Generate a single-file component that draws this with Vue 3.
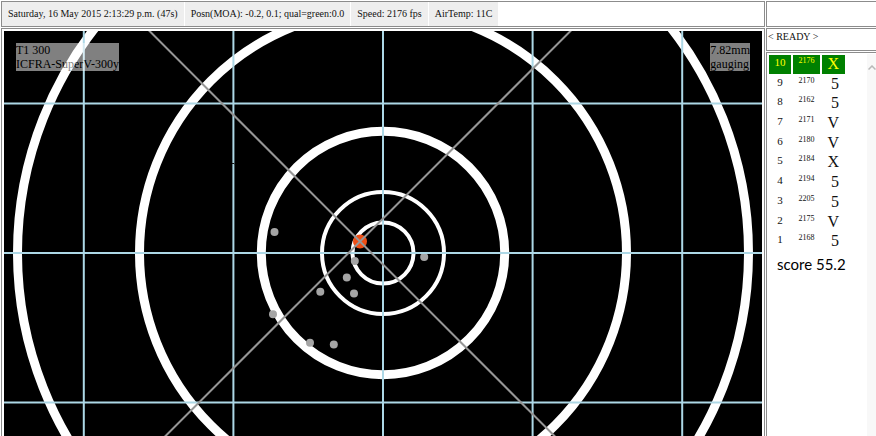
<script setup>
const readings = [
  'Saturday, 16 May 2015 2:13:29 p.m. (47s)',
  'Posn(MOA): -0.2, 0.1; qual=green:0.0',
  'Speed: 2176 fps',
  'AirTemp: 11C',
]

const rings = [
  { r: 365.5, w: 9 },
  { r: 243.5, w: 9 },
  { r: 121.7, w: 9 },
  { r: 61, w: 4 },
  { r: 30.5, w: 4 },
]
const columns = [79.8, 229.4, 379, 528.6, 678.2]
const rows = [72.4, 222, 371.6]

const hits = [
  [270.5, 201], [350.8, 229.9], [420.2, 226], [342.8, 246.5], [316.3, 260.8],
  [350, 262.4], [269, 283.2], [306, 311.7], [329.8, 313.6],
]
const latest = { x: 356, y: 210.5 }

const shots = [
  { n: 10, fps: 2176, value: 'X' },
  { n: 9, fps: 2170, value: '5' },
  { n: 8, fps: 2162, value: '5' },
  { n: 7, fps: 2171, value: 'V' },
  { n: 6, fps: 2180, value: 'V' },
  { n: 5, fps: 2184, value: 'X' },
  { n: 4, fps: 2194, value: '5' },
  { n: 3, fps: 2205, value: '5' },
  { n: 2, fps: 2175, value: 'V' },
  { n: 1, fps: 2168, value: '5' },
]
</script>

<template>
  <div class="page">
    <main class="main">
      <header class="bar frame">
        <span v-for="text in readings" :key="text" class="reading">{{ text }}</span>
      </header>
      <section class="range frame">
        <div class="target">
          <svg class="face" viewBox="0 0 758 405" preserveAspectRatio="xMidYMin slice" aria-hidden="true">
            <g fill="none" stroke="#fff">
              <circle v-for="ring in rings" :key="ring.r" cx="379" cy="222" :r="ring.r" :stroke-width="ring.w" />
            </g>
            <circle v-for="(hit, i) in hits" :key="i" :cx="hit[0]" :cy="hit[1]" r="4" fill="#a5a5a5" />
            <circle :cx="latest.x" :cy="latest.y" r="7" fill="#f04e14" />
            <g stroke="#add8e6" stroke-width="2">
              <line v-for="x in columns" :key="x" :x1="x" :x2="x" y1="0" y2="405" />
              <line v-for="y in rows" :key="y" x1="0" x2="758" :y1="y" :y2="y" />
            </g>
            <path d="M228 132.5 H230 L231 133.5" fill="none" stroke="#111" />
            <g stroke="#969696" stroke-width="2">
              <line :x1="latest.x - 220" :y1="latest.y - 220" :x2="latest.x + 220" :y2="latest.y + 220" />
              <line :x1="latest.x + 220" :y1="latest.y - 220" :x2="latest.x - 220" :y2="latest.y + 220" />
            </g>
          </svg>
          <p class="note left">T1 300<br />ICFRA-SuperV-300y</p>
          <p class="note right">7.82mm<br />gauging</p>
        </div>
      </section>
    </main>
    <aside class="side">
      <div class="blank frame"></div>
      <div class="status frame">&lt; READY &gt;</div>
      <section class="log frame">
        <div class="results">
          <table class="shots">
            <tbody>
              <tr v-for="shot in shots" :key="shot.n" :class="{ current: shot.n === 10 }">
                <td class="number">{{ shot.n }}</td>
                <td class="speed">{{ shot.fps }}</td>
                <td class="value">{{ shot.value }}</td>
              </tr>
            </tbody>
          </table>
          <p class="score">score 55.2</p>
        </div>
        <div class="track">
          <svg class="arrow" viewBox="0 0 8 5" aria-hidden="true">
            <path d="M0.5 4.5 L4 1 L7.5 4.5" fill="none" stroke="#b8b8b8" stroke-width="1.5" />
          </svg>
        </div>
      </section>
    </aside>
  </div>
</template>

<style>
body {
  background: #fff;
}
</style>

<style scoped>
.page {
  box-sizing: border-box;
  display: grid;
  grid-template-columns: minmax(0, 1fr) 110px;
  gap: 1px;
  min-height: 100vh;
  padding: 1px 0 0 1px;
  overflow: hidden;
  font-family: "Liberation Serif", serif;
  color: #111;
}
.main,
.side {
  display: flex;
  flex-direction: column;
  gap: 1px;
}
.side {
  margin-right: -2px;
}
.frame {
  box-sizing: border-box;
  border: 1px solid #8c8c8c;
}
.bar,
.blank {
  height: 26px;
}
.bar {
  display: flex;
  gap: 1px;
}
.reading {
  padding: 0 6px;
  background: #eee;
  font-size: 10px;
  line-height: 24px;
  white-space: nowrap;
}
.range {
  display: flex;
  flex: 1;
  padding: 2px 2px 0;
  border-bottom: 0;
}
.target {
  position: relative;
  flex: 1;
  background: #000;
}
.face {
  position: absolute;
  inset: 0;
  display: block;
  width: 100%;
  height: 100%;
}
.note {
  position: absolute;
  top: 12px;
  margin: 0;
  background: #fff;
  color: #000;
  opacity: 0.5;
  font-size: 12px;
  line-height: 14px;
}
.left {
  left: 12px;
}
.right {
  right: 12px;
}
.status {
  height: 23px;
  padding-left: 1px;
  font-size: 10px;
  line-height: 15px;
}
.log {
  display: flex;
  flex: 1;
  padding-top: 1px;
  border-bottom: 0;
}
.results {
  flex: 1;
}
.shots {
  width: 80px;
  height: 198px;
  border-spacing: 2px 1px;
}
.shots td {
  padding: 0;
  vertical-align: top;
}
.number {
  width: 22px;
  font-size: 11px;
  line-height: 14px;
  text-align: center;
}
.speed {
  font-size: 8px;
  line-height: 12px;
  text-align: center;
}
.shots .value {
  width: 23px;
  padding-right: 6px;
  box-sizing: border-box;
  font-size: 16px;
  line-height: 18px;
  text-align: right;
}
.current td {
  background: #008000;
  color: #ff0;
}
.score {
  margin: 2px 0 0 10px;
  color: #000;
  font-family: Lato, sans-serif;
  font-size: 15px;
  line-height: 20px;
}
.track {
  width: 10px;
  background: #f8f8f8;
}
.arrow {
  display: block;
  width: 8px;
  height: 5px;
  margin: 11px 0 0 1px;
}
</style>
